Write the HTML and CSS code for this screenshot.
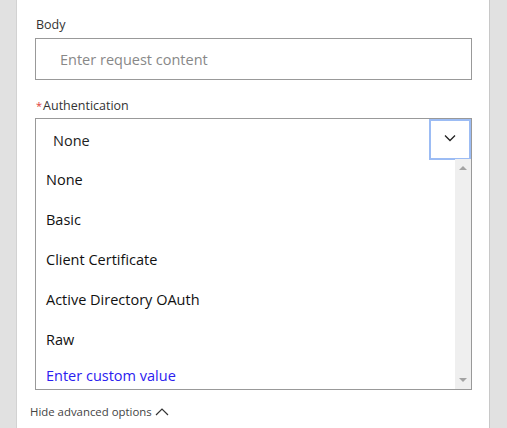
FILE: index.html
```html
<!DOCTYPE html>
<html>
<head>
<meta charset="utf-8">
<link rel="stylesheet" href="styles.css">
</head>
<body>
<div class="page">
  <div class="side side-left"></div>
  <div class="panel">
    <div class="field">
      <div class="label">Body</div>
      <div class="input"><span class="placeholder">Enter request content</span></div>
    </div>
    <div class="field auth">
      <div class="label"><span class="req">*</span>Authentication</div>
      <div class="combo">
        <div class="combo-head">
          <span class="selected">None</span>
          <div class="chev-btn">
            <svg width="12" height="8" viewBox="0 0 12 8"><path d="M1 1.5 L6 6.5 L11 1.5" fill="none" stroke="#222" stroke-width="1.3"/></svg>
          </div>
        </div>
        <div class="list-wrap">
          <ul class="list">
            <li>None</li>
            <li>Basic</li>
            <li>Client Certificate</li>
            <li>Active Directory OAuth</li>
            <li>Raw</li>
            <li class="custom">Enter custom value</li>
          </ul>
          <div class="scrollbar">
            <span class="arrow up"></span>
            <span class="arrow down"></span>
          </div>
        </div>
      </div>
    </div>
    <div class="advanced">Hide advanced options
      <svg width="14" height="9" viewBox="0 0 14 9"><path d="M1 8 L7 2 L13 8" fill="none" stroke="#333" stroke-width="1.2"/></svg>
    </div>
  </div>
  <div class="side side-right"></div>
</div>
</body>
</html>
```
FILE: styles.css
```css
html, body {
  margin: 0;
  padding: 0;
  background: #fff;
}
body {
  font-family: "Segoe UI", "Open Sans", "Noto Sans", sans-serif;
  color: #222;
}
.page {
  display: flex;
  width: 507px;
  height: 428px;
  overflow: hidden;
}
.side {
  background: #e1e1e1;
  flex: none;
}
.side-left {
  width: 16px;
  border-right: 1px solid #d2d2d2;
}
.side-right {
  width: 17px;
  border-left: 1px solid #c8c8c8;
}
.panel {
  flex: 1;
  padding: 16px 17px 0 18px;
  display: flex;
  flex-direction: column;
}
.label {
  font-size: 12.5px;
  color: #333;
  line-height: 17px;
  height: 17px;
  padding-left: 1px;
}
.req {
  color: #e0403a;
  font-size: 11px;
  margin-right: 1px;
}
.input {
  margin-top: 5px;
  height: 40px;
  border: 1px solid #999;
  display: flex;
  align-items: center;
  padding-left: 24px;
}
.placeholder {
  font-size: 14.5px;
  color: #888;
}
.auth {
  margin-top: 17px;
}
.combo {
  margin-top: 4px;
  border: 1px solid #999;
  height: 270px;
  display: flex;
  flex-direction: column;
}
.combo-head {
  height: 40px;
  display: flex;
  align-items: center;
  justify-content: space-between;
  flex: none;
}
.selected {
  font-size: 14.5px;
  padding-left: 17px;
  color: #222;
  margin-top: 2px;
}
.chev-btn {
  border: 2px solid #9cbcf4;
  display: flex;
  align-items: center;
  justify-content: center;
  width: 38px;
  height: 37px;
}
.chev-btn svg {
  margin-top: -2px;
}
.list-wrap {
  flex: 1;
  display: flex;
  min-height: 0;
}
.list {
  list-style: none;
  margin: 0;
  padding: 1px 0 0 10px;
  flex: 1;
}
.list li {
  font-size: 14.5px;
  height: 40px;
  line-height: 40px;
  color: #111;
}
.list li.custom {
  color: #2b20f0;
  height: 31px;
  line-height: 31px;
}
.scrollbar {
  width: 16px;
  background: #efefef;
  flex: none;
  display: flex;
  flex-direction: column;
  justify-content: space-between;
  align-items: center;
  padding: 7px 0 7px;
}
.arrow {
  width: 0;
  height: 0;
  border-left: 4px solid transparent;
  border-right: 4px solid transparent;
}
.arrow.up {
  border-bottom: 4px solid #a3a3a3;
}
.arrow.down {
  border-top: 4px solid #a3a3a3;
}
.advanced {
  margin-top: 14px;
  margin-left: -5px;
  font-size: 11.4px;
  color: #444;
  display: flex;
  align-items: center;
  gap: 3px;
}
.advanced svg {
  margin-top: -1px;
}
```
